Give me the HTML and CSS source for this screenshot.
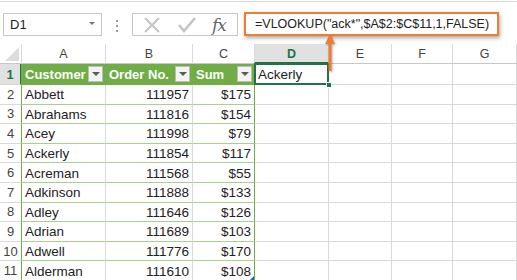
FILE: index.html
```html
<!DOCTYPE html>
<html lang="en">
<head>
  <meta charset="UTF-8">
  <title>VLOOKUP wildcard</title>
  <link rel="stylesheet" href="styles.css">
</head>
<body>
  <div id="bar">
    <div class="namebox"><span>D1</span><i class="drop"></i></div>
    <div class="dots"><b></b><b></b><b></b></div>
    <div class="fxbox">
      <svg class="ico" width="18" height="16" viewBox="0 0 18 16"><path d="M2 1 L16 15 M16 1 L2 15" stroke="#c4c4c4" stroke-width="2" fill="none"/></svg>
      <svg class="ico" width="18" height="16" viewBox="0 0 18 16"><path d="M1 8 L6 14 L17 1" stroke="#c4c4c4" stroke-width="2.6" fill="none"/></svg>
      <span class="fx">fx</span>
    </div>
    <div class="formula">=VLOOKUP("ack*",$A$2:$C$11,1,FALSE)</div>
    <svg class="arrow" width="20" height="40" viewBox="0 0 20 40">
      <path d="M10 1 L15 11 L11.5 11 L11.5 38 L8.5 38 L8.5 11 L5 11 Z" fill="#ed7d31"/>
    </svg>
  </div>

  <div id="sheet">
    <div class="hd corner"><svg width="14" height="14" viewBox="0 0 14 14"><path d="M14 0 L14 14 L0 14 Z" fill="#dcdcdc"/></svg></div>
    <div class="hd">A</div><div class="hd">B</div><div class="hd">C</div>
    <div class="hd sel">D</div><div class="hd">E</div><div class="hd">F</div><div class="hd">G</div>

    <div class="rn sel">1</div>
    <div class="th first">Customer<i class="flt"></i></div>
    <div class="th">Order No.<i class="flt"></i></div>
    <div class="th last">Sum<i class="flt"></i></div>
    <div class="c active">Ackerly<i class="handle"></i></div><div class="c"></div><div class="c"></div><div class="c"></div>

    <div class="rn">2</div><div class="td first">Abbett</div><div class="td num">111957</div><div class="td num last">$175</div><div class="c"></div><div class="c"></div><div class="c"></div><div class="c"></div>
    <div class="rn">3</div><div class="td first">Abrahams</div><div class="td num">111816</div><div class="td num last">$154</div><div class="c"></div><div class="c"></div><div class="c"></div><div class="c"></div>
    <div class="rn">4</div><div class="td first">Acey</div><div class="td num">111998</div><div class="td num last">$79</div><div class="c"></div><div class="c"></div><div class="c"></div><div class="c"></div>
    <div class="rn">5</div><div class="td first">Ackerly</div><div class="td num">111854</div><div class="td num last">$117</div><div class="c"></div><div class="c"></div><div class="c"></div><div class="c"></div>
    <div class="rn">6</div><div class="td first">Acreman</div><div class="td num">111568</div><div class="td num last">$55</div><div class="c"></div><div class="c"></div><div class="c"></div><div class="c"></div>
    <div class="rn">7</div><div class="td first">Adkinson</div><div class="td num">111888</div><div class="td num last">$133</div><div class="c"></div><div class="c"></div><div class="c"></div><div class="c"></div>
    <div class="rn">8</div><div class="td first">Adley</div><div class="td num">111646</div><div class="td num last">$126</div><div class="c"></div><div class="c"></div><div class="c"></div><div class="c"></div>
    <div class="rn">9</div><div class="td first">Adrian</div><div class="td num">111689</div><div class="td num last">$103</div><div class="c"></div><div class="c"></div><div class="c"></div><div class="c"></div>
    <div class="rn">10</div><div class="td first">Adwell</div><div class="td num">111776</div><div class="td num last">$170</div><div class="c"></div><div class="c"></div><div class="c"></div><div class="c"></div>
    <div class="rn">11</div><div class="td first">Alderman</div><div class="td num">111610</div><div class="td num last end">$108<i class="resize"></i></div><div class="c"></div><div class="c"></div><div class="c"></div><div class="c"></div>
  </div>
</body>
</html>
```

FILE: styles.css
```css
* { box-sizing: border-box; }
body { margin: 0; background: #fff; font-family: "Liberation Sans", Arial, sans-serif; color: #222; overflow: hidden; }

/* formula bar */
#bar {
  position: relative; height: 43px; margin-top: 1px; border-top: 1px solid #d8d8d8;
  display: flex; align-items: flex-start; padding-top: 10px;
}
.namebox {
  margin: 1px 0 0 3px; width: 99px; height: 23px; border: 1px solid #c6c6c6;
  display: flex; align-items: center; justify-content: space-between; padding: 0 6px 0 6px;
  font-size: 13px;
}
.drop { border-left: 3px solid transparent; border-right: 3px solid transparent; border-top: 3px solid #777; margin-top: -2px; }
.dots { width: 30px; display: flex; flex-direction: column; align-items: center; gap: 3px; padding-top: 8px; }
.dots b { width: 2px; height: 2px; background: #999; }
.fxbox {
  margin-top: 1px; width: 106px; height: 23px; border: 1px solid #c6c6c6;
  display: flex; align-items: center; padding-left: 10px; gap: 17px;
}
.fx { font-family: "DejaVu Serif", "Liberation Serif", serif; font-style: italic; font-size: 17px; color: #666; margin-left: -1px; letter-spacing: -1px; }
.formula {
  margin-left: 6px; width: 255px; height: 24px; border: 2px solid #ed7d31; background: #fff;
  box-shadow: 1px 2px 4px rgba(0,0,0,0.35);
  font-size: 12.5px; padding: 3px 0 0 9px; color: #222; white-space: nowrap; position: relative; z-index: 2;
}
.arrow { position: absolute; left: 320px; top: 31px; z-index: 3; filter: drop-shadow(1px 1px 1px rgba(0,0,0,0.3)); }

/* grid */
#sheet {
  display: grid;
  grid-template-columns: 22px 84px 87px 62px 74px 63px 61px 64px;
  grid-template-rows: 20px 21px repeat(10, 19.6px);
}
#sheet > div { border-right: 1px solid #d9d9d9; border-bottom: 1px solid #d9d9d9; position: relative; white-space: nowrap; }
.hd { font-size: 12.5px; color: #444; display: flex; align-items: center; justify-content: center; padding-top: 1px; border-bottom-color: #c8c8c8 !important; }
.hd.sel { background: #e1e1e1; color: #217346; font-weight: bold; border-bottom: 2px solid #217346 !important; }
.corner { justify-content: flex-end; align-items: flex-end; padding: 0 2px 2px 0; }
.rn { font-size: 13px; color: #444; display: flex; align-items: center; justify-content: center; }
.rn.sel { background: #e1e1e1; color: #217346; font-weight: bold; border-right: 2px solid #217346 !important; }

.th {
  background: #70ad47; color: #fff; font-weight: bold; font-size: 13px;
  display: flex; align-items: center; justify-content: space-between; padding: 0 2px 0 3px;
  border-right-color: #70ad47 !important; border-bottom-color: #70ad47 !important;
}
.flt {
  width: 15px; height: 16px; background: #f3f3f3; border: 1px solid #bcbcbc;
  display: flex; align-items: center; justify-content: center;
}
.flt::after { content: ""; border-left: 4px solid transparent; border-right: 4px solid transparent; border-top: 4px solid #5a5a5a; }

.td { font-size: 13.5px; display: flex; align-items: center; padding: 1px 3px 0 3px; border-bottom-color: #a9d08e !important; }
.td.num { justify-content: flex-end; }
.first { border-left: 1px solid #70ad47; margin-left: -1px; }
.last { border-right-color: #70ad47 !important; }

.c { font-size: 13.5px; display: flex; align-items: center; padding: 1px 3px 0 3px; }
.c.active::after { content: ""; position: absolute; left: -1px; top: -1px; right: -1px; bottom: -1px; border: 2px solid #217346; }
.handle { position: absolute; right: -4px; bottom: -4px; width: 6px; height: 6px; background: #217346; border: 1px solid #fff; z-index: 2; }
.resize { position: absolute; right: 0; bottom: 0; width: 0; height: 0; border-left: 4px solid transparent; border-bottom: 4px solid #1f5fbf; }
```
